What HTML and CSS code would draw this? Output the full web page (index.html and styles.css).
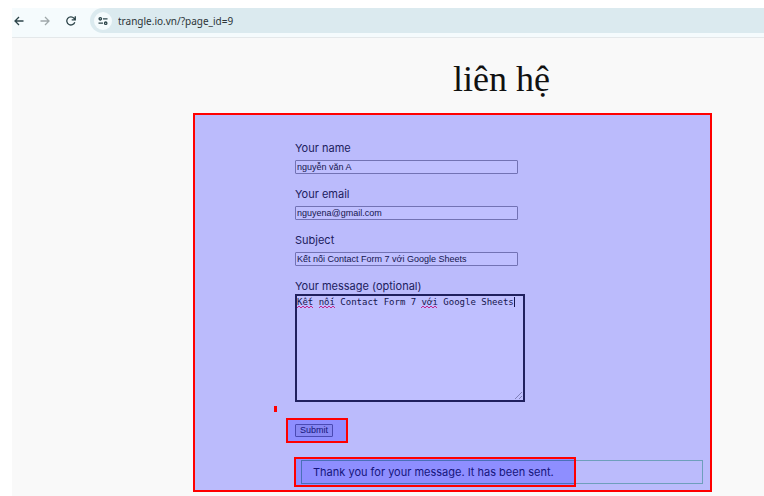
FILE: index.html
```html
<!DOCTYPE html>
<html lang="vi">
<head>
<meta charset="utf-8">
<title>liên hệ</title>
<link rel="stylesheet" href="styles.css">
</head>
<body>
<div class="browser">
  <header class="toolbar">
    <button class="nav" type="button" aria-label="Back">
      <svg viewBox="0 0 10 10"><path d="M9.500 5H1M5 1L1 5l4 4"/></svg>
    </button>
    <button class="nav nav-off" type="button" aria-label="Forward">
      <svg viewBox="0 0 10 10"><path d="M.5 5H9M5 1l4 4-4 4"/></svg>
    </button>
    <button class="nav" type="button" aria-label="Reload">
      <svg viewBox="0 0 10 10"><path d="M8.800 6.200A4.100 4.100 0 1 1 8 2.200L9 3.600M9.300.3v3.600H5.700"/></svg>
    </button>
    <div class="address">
      <button class="site-info" type="button" aria-label="Site information">
        <svg viewBox="0 0 10 10"><path d="M5 2.800h4.500M.5 7.200H5"/><circle cx="2.300" cy="2.800" r="1.200"/><circle cx="7.700" cy="7.200" r="1.200"/></svg>
      </button>
      <input class="url" type="text" aria-label="Address" value="trangle.io.vn/?page_id=9" spellcheck="false">
    </div>
  </header>
  <main class="page">
    <h1 class="title">liên hệ</h1>
    <form class="panel">
      <div class="field">
        <label for="name">Your name</label>
        <input id="name" type="text" value="nguyễn văn A">
      </div>
      <div class="field">
        <label for="email">Your email</label>
        <input id="email" type="email" value="nguyena@gmail.com">
      </div>
      <div class="field">
        <label for="subject">Subject</label>
        <input id="subject" type="text" value="Kết nối Contact Form 7 với Google Sheets">
      </div>
      <div class="field field-message">
        <label for="message">Your message (optional)</label>
        <div class="message-box">
          <textarea id="message" spellcheck="false">Kết nối Contact Form 7 với Google Sheets</textarea>
          <svg class="marks" viewBox="0 0 226 104">
            <path class="spelling" d="M0 12l2-2 2 2 2-2 2 2 2-2 2 2 2-2 2 2M22 12l2-2 2 2 2-2 2 2 2-2 2 2 2-2 2 2M124 12l2-2 2 2 2-2 2 2 2-2 2 2 2-2 2 2"/>
            <path class="caret" d="M217.500 1v10"/>
            <path class="grip" d="M218 103l7-7M222 103l3-3"/>
          </svg>
        </div>
      </div>
      <div class="submit-mark"><button class="submit" type="submit">Submit</button></div>
      <div class="response"><p class="response-text" role="status">Thank you for your message. It has been sent.</p></div>
      <span class="tick"></span>
    </form>
  </main>
</div>
</body>
</html>
```
FILE: styles.css
```css
*,
*::before,
*::after {
  box-sizing: border-box;
}

body {
  margin: 0;
  background: #fff;
  font: 11px/16px Inter, sans-serif;
  color: #20205e;
}

.browser {
  display: flex;
  flex-direction: column;
  min-height: 100vh;
  padding: 8px 0 0 12px;
}

.toolbar {
  display: flex;
  align-items: flex-start;
  height: 30px;
  background: #f5fbfd;
  border-bottom: 1px solid #e4e8ea;
}

.nav,
.site-info {
  display: flex;
  align-items: center;
  justify-content: center;
  padding: 0;
  border: 0;
  background: none;
  color: #2c4449;
}

.nav {
  width: 14px;
  height: 25px;
  margin-right: 12px;
}

.nav svg,
.site-info svg {
  width: 10px;
  height: 10px;
  fill: none;
  stroke: currentColor;
  stroke-width: 1.3;
}

.nav-off {
  color: #a0a8aa;
}

.address {
  display: flex;
  flex: 1;
  align-items: center;
  gap: 6px;
  height: 25px;
  padding-left: 4px;
  border-radius: 13px 0 0 13px;
  background: #dbeaef;
}

.site-info {
  width: 18px;
  height: 18px;
  border-radius: 50%;
  background: #f5fbfd;
}

.url {
  flex: 1;
  padding: 0;
  border: 0;
  background: none;
  color: #2b3437;
  font: 10px/16px "Noto Sans", sans-serif;
}

.page {
  flex: 1;
  padding: 17px 52px 4px 181px;
  background: #f9f9f9;
}

.title {
  margin: 0 0 10px 98px;
  color: #111;
  font: 36px/48px "Liberation Serif", serif;
  text-align: center;
}

.panel {
  position: relative;
  padding: 25px 7px 6px 100px;
  border: 2px solid #ff0000;
  background: #bbbbfc;
}

.field {
  display: flex;
  flex-direction: column;
  align-items: flex-start;
  gap: 4px;
  margin-bottom: 12px;
}

.field input {
  width: 223px;
  height: 14px;
  padding: 0 1px;
  border: 1px solid #7272b4;
  border-radius: 1px;
  background: #bfbfff;
  color: #15154e;
  font: 9px/12px "Liberation Sans", sans-serif;
}

.field-message {
  gap: 0;
  margin-bottom: 16px;
}

.message-box {
  position: relative;
  width: 230px;
  height: 108px;
}

.message-box textarea {
  display: block;
  width: 100%;
  height: 100%;
  padding: 0;
  border: 2px solid #20205e;
  background: #bfbfff;
  color: #15154e;
  font: 9px/12px "DejaVu Sans Mono", monospace;
  resize: none;
}

.marks {
  position: absolute;
  inset: 2px;
  fill: none;
  pointer-events: none;
}

.spelling {
  stroke: #c2278c;
}

.caret {
  stroke: #15154e;
}

.grip {
  stroke: #8080b8;
}

.submit-mark {
  width: 62px;
  height: 25px;
  margin: 0 0 17px -9px;
  padding: 4px 7px;
  border: 2px solid #ff0000;
  background: #8e8eff;
}

.submit {
  display: block;
  width: 38px;
  height: 13px;
  padding: 0;
  border: 1px solid #4a4ab4;
  border-radius: 1px;
  background: #8888f4;
  color: #15157c;
  font: 9px/11px "Liberation Sans", sans-serif;
}

.response {
  position: relative;
  height: 24px;
  margin-left: 6px;
  border: 1px solid #6e9fbc;
}

.response::before {
  content: "";
  position: absolute;
  top: -4px;
  left: -8px;
  width: 282px;
  height: 30px;
  border: 2px solid #ff0000;
  background: #8e8eff;
}

.response::after {
  content: "";
  position: absolute;
  top: -1px;
  left: -1px;
  width: 273px;
  height: 24px;
  border: solid #4a70b8;
  border-width: 1px 0 1px 1px;
}

.response-text {
  position: relative;
  z-index: 1;
  margin: 0;
  padding: 3px 11px;
  color: #15157c;
}

.tick {
  position: absolute;
  top: 291px;
  left: 79px;
  width: 3px;
  height: 6px;
  background: #ff0000;
}
```
